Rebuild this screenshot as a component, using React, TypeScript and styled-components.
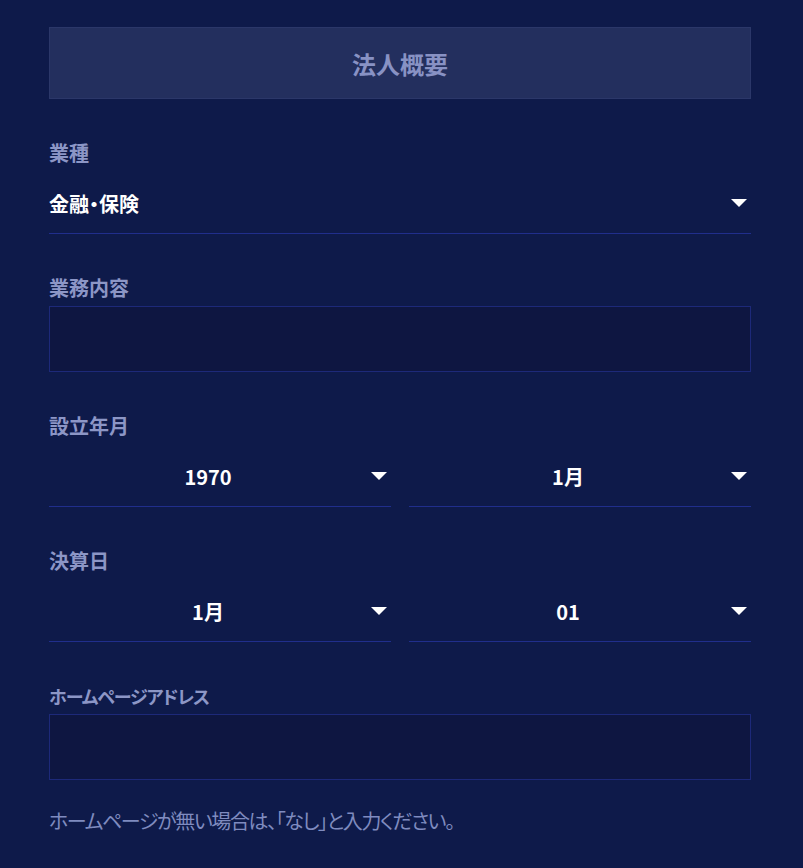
import React, { useState } from 'react';
import styled, { createGlobalStyle } from 'styled-components';

const GlobalStyle = createGlobalStyle`
	* {
		box-sizing: border-box;
	}
	body {
		margin: 0;
		background: #0e1a4a;
		font-family: 'Noto Sans CJK JP', 'Noto Sans', sans-serif;
		font-feature-settings: 'palt';
	}
`;

const years = Array.from({ length: 60 }, (_, i) => String(1970 + i));
const months = Array.from({ length: 12 }, (_, i) => `${i + 1}月`);
const days = Array.from({ length: 31 }, (_, i) => String(i + 1).padStart(2, '0'));
const industries = ['金融・保険', '製造業', '情報通信業', '小売業', 'サービス業'];

type SelectProps = {
	value: string;
	options: string[];
	onChange: (v: string) => void;
	center?: boolean;
};

const SelectField = ({ value, options, onChange, center }: SelectProps) => (
	<StyledSelectWrap>
		<StyledSelect
			$center={center}
			value={value}
			onChange={(e) => onChange(e.target.value)}
		>
			{options.map((o) => (
				<option key={o} value={o}>
					{o}
				</option>
			))}
		</StyledSelect>
		<StyledArrow width='16' height='8' viewBox='0 0 16 8'>
			<path d='M0 0 L16 0 L8 8 Z' fill='#ffffff' />
		</StyledArrow>
	</StyledSelectWrap>
);

const App = () => {
	const [industry, setIndustry] = useState('金融・保険');
	const [year, setYear] = useState('1970');
	const [month, setMonth] = useState('1月');
	const [closeMonth, setCloseMonth] = useState('1月');
	const [closeDay, setCloseDay] = useState('01');

	return (
		<>
			<GlobalStyle />
			<StyledPage>
				<StyledHeading>法人概要</StyledHeading>

				<StyledGroup>
					<StyledLabel>業種</StyledLabel>
					<SelectField
						value={industry}
						options={industries}
						onChange={setIndustry}
					/>
				</StyledGroup>

				<StyledGroup>
					<StyledLabel>業務内容</StyledLabel>
					<StyledInput type='text' />
				</StyledGroup>

				<StyledGroup>
					<StyledLabel>設立年月</StyledLabel>
					<StyledPair>
						<SelectField center value={year} options={years} onChange={setYear} />
						<SelectField center value={month} options={months} onChange={setMonth} />
					</StyledPair>
				</StyledGroup>

				<StyledGroup>
					<StyledLabel>決算日</StyledLabel>
					<StyledPair>
						<SelectField
							center
							value={closeMonth}
							options={months}
							onChange={setCloseMonth}
						/>
						<SelectField
							center
							value={closeDay}
							options={days}
							onChange={setCloseDay}
						/>
					</StyledPair>
				</StyledGroup>

				<StyledGroup>
					<StyledLabel $kana>ホームページアドレス</StyledLabel>
					<StyledInput type='text' />
					<StyledNote>ホームページが無い場合は、「なし」と入力ください。</StyledNote>
				</StyledGroup>
			</StyledPage>
		</>
	);
};

export default App;

const StyledPage = styled.div`
	width: 702px;
	margin: 0 auto 0 49px;
	padding: 27px 0 40px;
	display: flex;
	flex-direction: column;
	gap: 42px;
`;

const StyledHeading = styled.h2`
	margin: 0;
	height: 72px;
	display: flex;
	align-items: center;
	justify-content: center;
	background: #232f5e;
	border: 1px solid #2b3769;
	color: #8892c4;
	font-size: 24px;
	font-weight: 700;
`;

const StyledGroup = styled.div`
	display: flex;
	flex-direction: column;
`;

/* kana-only labels run narrower in the original font */
const StyledLabel = styled.label<{ $kana?: boolean }>`
	font-size: ${({ $kana }) => ($kana ? '18px' : '20px')};
	line-height: 24px;
	font-weight: 700;
	color: #8c96c6;
	letter-spacing: ${({ $kana }) => ($kana ? '-1px' : '0')};
`;

const StyledSelectWrap = styled.div`
	position: relative;
	flex: 1;
	margin-top: 8px;
	height: 61px;
	border-bottom: 1px solid #202e8c;
`;

const StyledSelect = styled.select<{ $center?: boolean }>`
	appearance: none;
	width: 100%;
	height: 60px;
	padding: 0 24px 0 0;
	background: transparent;
	border: none;
	outline: none;
	color: #ffffff;
	font-family: inherit;
	font-feature-settings: 'palt';
	font-size: 20px;
	font-weight: 700;
	text-align: ${({ $center }) => ($center ? 'center' : 'left')};
	text-align-last: ${({ $center }) => ($center ? 'center' : 'left')};
	cursor: pointer;
	option {
		background: #0e1a4a;
		color: #ffffff;
	}
`;

const StyledArrow = styled.svg`
	position: absolute;
	right: 4px;
	top: 26px;
	pointer-events: none;
`;

const StyledPair = styled.div`
	display: flex;
	gap: 18px;
`;

const StyledInput = styled.input`
	margin-top: 6px;
	height: 66px;
	width: 100%;
	padding: 0 16px;
	background: #0e1641;
	border: 1px solid #1d2979;
	outline: none;
	color: #ffffff;
	font-family: inherit;
	font-size: 20px;
`;

const StyledNote = styled.p`
	margin: 29px 0 0;
	font-size: 20px;
	line-height: 24px;
	color: #7f8bbf;
	letter-spacing: -1.4px;
`;
